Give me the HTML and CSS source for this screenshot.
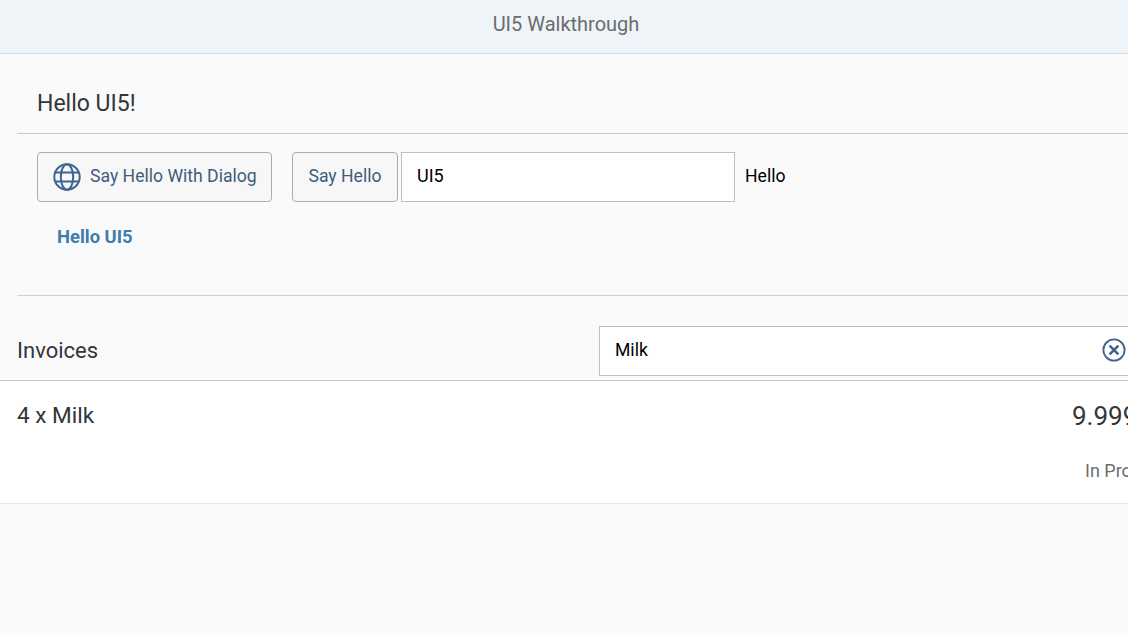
FILE: index.html
```html
<!DOCTYPE html>
<html lang="en">
<head>
<meta charset="utf-8">
<title>UI5 Walkthrough</title>
<link rel="stylesheet" href="styles.css">
</head>
<body>
<div class="app">
  <header class="shell-header">UI5 Walkthrough</header>
  <main class="content">
    <section class="panel">
      <h2 class="panel-title">Hello UI5!</h2>
      <div class="panel-body">
        <div class="toolbar">
          <button class="btn btn-dialog" type="button">
            <svg class="globe" viewBox="0 0 28 28" width="28" height="28" aria-hidden="true">
              <circle cx="14" cy="14" r="12.7"/>
              <ellipse cx="14" cy="14" rx="6.2" ry="12.7"/>
              <path d="M2.6 9.4H25.4M2.6 18.6H25.4"/>
            </svg>
            <span class="btn-label">Say Hello With Dialog</span>
          </button>
          <button class="btn btn-hello" type="button"><span class="btn-label">Say Hello</span></button>
          <input class="input name-input" type="text" value="UI5">
          <span class="hello-text">Hello</span>
        </div>
        <p class="hello-strong">Hello UI5</p>
      </div>
    </section>
    <section class="invoices">
      <div class="list-head">
        <h2 class="list-title">Invoices</h2>
        <div class="search">
          <span class="search-value">Milk</span>
          <svg class="clear" viewBox="0 0 24 24" width="24" height="24" aria-hidden="true">
            <circle cx="12" cy="12" r="10.6"/>
            <path d="M7.6 7.6L16.4 16.4M16.4 7.6L7.6 16.4"/>
          </svg>
        </div>
      </div>
      <div class="list-row">
        <div class="row-top">
          <span class="row-title">4 x Milk</span>
          <span class="row-price">9.999</span>
        </div>
        <div class="row-status">In Progress</div>
      </div>
    </section>
  </main>
</div>
</body>
</html>
```
FILE: styles.css
```css
* { box-sizing: border-box; }
html, body { margin: 0; height: 100%; overflow: hidden; }
body { font-family: Roboto, "Noto Sans", sans-serif; background: #fafafa; color: #32363a; }
.app { width: 1128px; height: 633px; overflow: hidden; display: flex; flex-direction: column; }
.shell-header { height: 54px; flex: none; display: flex; align-items: center; justify-content: center; background: #eff4f9; border-bottom: 1px solid #d9dfe6; color: #6a6d70; font-size: 20px; padding: 0 0 6px 4px; }
.content { width: 1240px; flex: 1; }
.panel { margin-left: 17px; border-bottom: 1px solid #d0d0d0; height: 242px; }
.panel-title { margin: 0; height: 80px; padding: 34px 0 0 20px; font-weight: 400; font-size: 23px; line-height: 32px; border-bottom: 1px solid #c8c8c8; }
.panel-body { padding: 18px 0 0 20px; }
.toolbar { display: flex; align-items: center; height: 50px; }
.btn { height: 50px; border: 1px solid #ababab; border-radius: 4px; background: #f7f7f7; color: #3e5c7d; font: inherit; font-size: 17.6px; padding: 0; display: flex; align-items: center; }
.btn-label { padding-bottom: 2px; }
.btn-dialog { width: 235px; padding-left: 15px; gap: 9px; margin-right: 20px; }
.btn-hello { width: 106px; justify-content: center; margin-right: 3px; }
.globe { flex: none; fill: none; stroke: #3e6490; stroke-width: 2; }
.input { width: 334px; height: 50px; border: 1px solid #bfbfbf; background: #fff; font: inherit; font-size: 18px; color: #000; padding: 0 15px 4px; border-radius: 0; outline: none; }
.hello-text { margin-left: 10px; padding-bottom: 2px; font-size: 17.6px; color: #000; }
.hello-strong { margin: 21px 0 0 20px; font-size: 18.4px; font-weight: 700; line-height: 28px; color: #427cac; }
.list-head { height: 84px; margin-left: 17px; padding-top: 30px; display: flex; align-items: flex-start; }
.list-title { margin: 10px 0 0; width: 582px; flex: none; font-size: 22px; font-weight: 400; line-height: 30px; }
.search { width: 540px; height: 50px; display: flex; align-items: center; background: #fff; border: 1px solid #bfbfbf; padding: 0 0 2px 15px; position: relative; font-size: 17.6px; color: #000; }
.clear { position: absolute; left: 502px; top: 11px; fill: none; stroke: #3e6490; stroke-width: 1.8; }
.clear path { stroke-width: 2.6; }
.list-row { height: 124px; background: #fff; border-top: 1px solid #c8c8c8; border-bottom: 1px solid #e5e5e5; padding: 0 0 0 17px; }
.row-top { display: flex; height: 70px; padding-top: 18px; }
.row-title { width: 1055px; flex: none; font-size: 22.6px; line-height: 34px; }
.row-price { font-size: 26px; line-height: 34px; white-space: nowrap; }
.row-status { padding-left: 1068px; font-size: 18px; line-height: 30px; color: #6a6d70; margin-top: 5px; white-space: nowrap; }
```
